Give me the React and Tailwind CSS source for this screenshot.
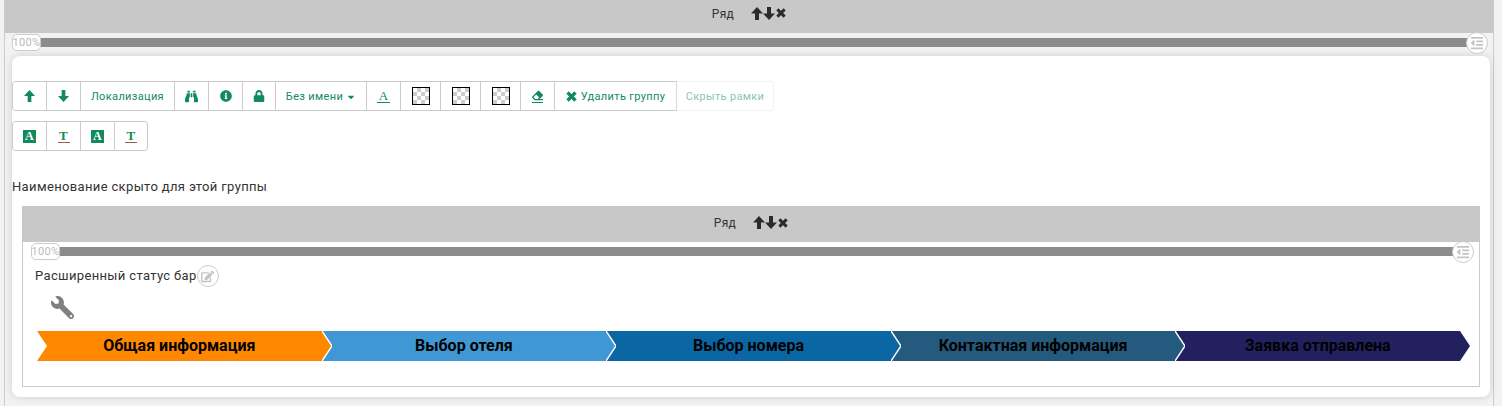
import React from 'react';
import { FaBinoculars, FaInfoCircle, FaLock, FaCaretDown, FaEraser, FaWrench, FaEdit, FaOutdent } from 'react-icons/fa';

const green = 'text-[#128a5e]';

const Btn = ({ className = '', children }) => (
    <div className={`h-[30px] flex items-center justify-center border border-[#ccc] -ml-px first:ml-0 bg-white ${green} ${className}`}>
        {children}
    </div>
);

const ArrowUp = ({ className }) => (
    <svg className={className} viewBox="0 0 12 13" fill="currentColor">
        <polygon points="6,0 12,6.5 8,6.5 8,13 4,13 4,6.5 0,6.5" />
    </svg>
);

const ArrowDown = ({ className }) => (
    <svg className={className} viewBox="0 0 12 13" fill="currentColor">
        <polygon points="4,0 8,0 8,6.5 12,6.5 6,13 0,6.5 4,6.5" />
    </svg>
);

const Cross = ({ className }) => (
    <svg className={className} viewBox="0 0 11 11" stroke="currentColor" strokeWidth="3.2" fill="none">
        <path d="M1.5 1.5 L9.5 9.5 M9.5 1.5 L1.5 9.5" />
    </svg>
);

const Letter = ({ char }) => (
    <span className="flex flex-col items-center leading-none font-['Liberation_Serif'] text-[13px] border-b border-[#128a5e] w-[13px] h-[14px]">
        {char}
    </span>
);

const Filled = () => (
    <span className="flex items-center justify-center w-[13px] h-[13px] bg-[#128a5e] text-white font-['Liberation_Serif'] font-bold text-[12px] leading-none">
        A
    </span>
);

const Underlined = () => (
    <span className="flex justify-center leading-none font-['Liberation_Serif'] font-bold text-[13px] text-[#128a5e] border-b border-[#a0634a] w-[12px] h-[14px]">
        T
    </span>
);

const Swatch = () => (
    <span className="block w-[18px] h-[18px] border border-black bg-[repeating-conic-gradient(#cccccc_0_25%,#ffffff_0_50%)] bg-[length:8px_8px]" />
);

const RowHeader = ({ className }) => (
    <div className={`flex items-center justify-center bg-[#c8c8c8] text-[12px] text-[#333] ${className}`}>
        <span className="mr-[17px] mt-[1px] tracking-[0.3px]">Ряд</span>
        <ArrowUp className="w-[12px] h-[13px] text-[#2a2a2a]" />
        <ArrowDown className="w-[12px] h-[13px] text-[#2a2a2a]" />
        <Cross className="ml-[1px] w-[10px] h-[10px] text-[#2a2a2a]" />
    </div>
);

const WidthBar = ({ className }) => (
    <div className={`relative h-[9px] bg-[#8c8c8c] ${className}`}>
        <span className="absolute -left-[28px] -top-[4px] w-[29px] h-[17px] flex items-center justify-center overflow-visible rounded-[5px] border border-[#ccc] bg-white text-[11px] leading-none text-[#bbb] whitespace-nowrap">
            100%
        </span>
        <span className="absolute -right-[21px] -top-[6px] w-[22px] h-[22px] flex items-center justify-center rounded-full border border-[#ccc] bg-white">
            <FaOutdent className="w-[14px] h-[14px] text-[#c4c4c4]" />
        </span>
    </div>
);

const steps = [
    { label: 'Общая информация', color: 'bg-[#ff8800]', fill: '#ff8800' },
    { label: 'Выбор отеля', color: 'bg-[#3f97d3]', fill: '#3f97d3' },
    { label: 'Выбор номера', color: 'bg-[#0b66a4]', fill: '#0b66a4' },
    { label: 'Контактная информация', color: 'bg-[#235a7d]', fill: '#235a7d' },
    { label: 'Заявка отправлена', color: 'bg-[#232060]', fill: '#232060' },
];

const StatusBar = () => (
    <div className="flex ml-[14px] mr-[19px] h-[30px]">
        {steps.map((step, i) => (
            <div key={step.label} className={`relative flex-1 flex items-center justify-center ${step.color}`}>
                {i === 0 && (
                    <svg className="absolute left-0 top-0" width="10" height="30" viewBox="0 0 10 30">
                        <polygon points="0,0 10,15 0,30" fill="#fff" />
                    </svg>
                )}
                <span className="font-['Roboto'] font-bold text-[16px] tracking-normal text-black relative z-20">{step.label}</span>
                <svg className="absolute -right-[10px] top-0 z-10" width="10" height="30" viewBox="0 0 10 30">
                    <polygon points="0,0 10,15 0,30" fill={step.fill} />
                    {i < steps.length - 1 && <polyline points="0,0 10,15 0,30" fill="none" stroke="#fff" strokeWidth="1.5" />}
                </svg>
            </div>
        ))}
    </div>
);

export default function App() {
    return (
        <div className="w-[1502px] h-[406px] overflow-hidden bg-[#f2f2f2] font-['Roboto',sans-serif] text-[13px] text-[#333] tracking-[0.35px]">
            <div className="ml-[4px] mr-[8px] h-full border-x border-[#ccc]">
                <RowHeader className="h-[33px] pb-[7px]" />
                <WidthBar className="mt-[5px] ml-[35px] mr-[26px]" />
                <div className="mt-[9px] ml-[7px] mr-[3px] h-[341px] rounded-[8px] bg-white shadow-[0_0_8px_rgba(0,0,0,0.15)] pt-[25px]">
                    <div className="flex text-[11px]">
                        <Btn className="w-[35px] rounded-l-[3px]"><ArrowUp className="w-[11px] h-[12px]" /></Btn>
                        <Btn className="w-[35px]"><ArrowDown className="w-[11px] h-[12px]" /></Btn>
                        <Btn className="w-[95px] pt-[2px]">Локализация</Btn>
                        <Btn className="w-[35px]"><FaBinoculars className="w-[13px] h-[13px]" /></Btn>
                        <Btn className="w-[35px]"><FaInfoCircle className="w-[12px] h-[12px]" /></Btn>
                        <Btn className="w-[34px]"><FaLock className="w-[12px] h-[12px]" /></Btn>
                        <Btn className="w-[92px] pt-[2px]">Без имени<FaCaretDown className="ml-[3px] w-[10px] h-[10px]" /></Btn>
                        <Btn className="w-[35px]"><Letter char="A" /></Btn>
                        <Btn className="w-[41px]"><Swatch /></Btn>
                        <Btn className="w-[41px]"><Swatch /></Btn>
                        <Btn className="w-[41px]"><Swatch /></Btn>
                        <Btn className="w-[35px]"><span className="border-b border-[#128a5e] h-[13px] leading-none"><FaEraser className="w-[11px] h-[11px]" /></span></Btn>
                        <Btn className="w-[123px] pt-[2px]"><Cross className="mr-[4px] -mt-[2px] w-[11px] h-[11px]" />Удалить группу</Btn>
                        <Btn className="w-[98px] pt-[2px] rounded-r-[3px] border-[#e6e6e6] opacity-50">Скрыть рамки</Btn>
                    </div>
                    <div className="flex mt-[10px]">
                        <Btn className="w-[35px] rounded-l-[3px]"><Filled /></Btn>
                        <Btn className="w-[35px]"><Underlined /></Btn>
                        <Btn className="w-[35px]"><Filled /></Btn>
                        <Btn className="w-[34px] rounded-r-[3px]"><Underlined /></Btn>
                    </div>
                    <p className="mt-[28px] leading-[16px]">Наименование скрыто для этой группы</p>
                    <div className="mt-[11px] mx-[10px] h-[181px] border border-[#ccc]">
                        <RowHeader className="h-[36px] -mx-px -mt-px pb-[3px]" />
                        <WidthBar className="mt-[5px] ml-[36px] mr-[26px]" />
                        <div className="mt-[9px] ml-[12px] flex items-center h-[22px]">
                            <span>Расширенный статус бар</span>
                            <span className="w-[22px] h-[22px] flex items-center justify-center rounded-full border border-[#ccc]">
                                <FaEdit className="w-[13px] h-[13px] text-[#c4c4c4]" />
                            </span>
                        </div>
                        <div className="mt-[9px] ml-[28px] h-[24px]">
                            <FaWrench className="w-[23px] h-[23px] text-[#808080] -scale-x-100" />
                        </div>
                        <div className="mt-[11px]">
                            <StatusBar />
                        </div>
                    </div>
                </div>
            </div>
        </div>
    );
}
